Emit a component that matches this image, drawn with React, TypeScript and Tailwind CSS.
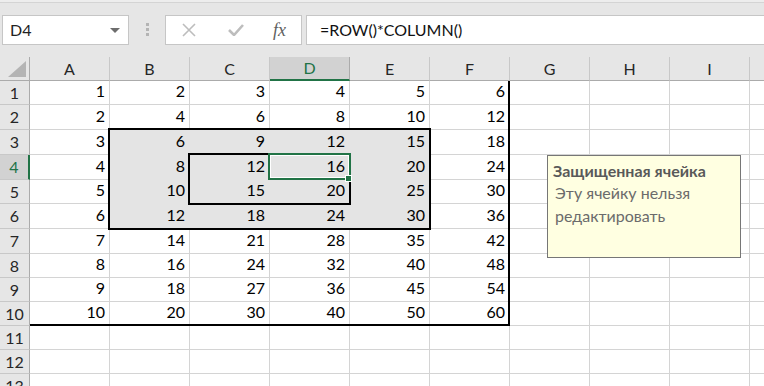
import React from 'react';

const COLS = ['A', 'B', 'C', 'D', 'E', 'F', 'G', 'H', 'I', 'J'];
const ROW_H = [24, 25, 25, 25, 24, 25, 25, 24, 24, 24, 24, 24, 24];

const inSel = (r: number, c: number) => r >= 3 && r <= 6 && c >= 2 && c <= 5;

const Toolbar = () => (
    <div className="h-[57px] shrink-0 flex flex-col">
        <div className="h-[2px] bg-[#ededed]" />
        <div className="h-[1px] bg-[#d4d4d4]" />
        <div className="flex items-start pt-[12px]">
            {/* NAME BOX */}
            <div className="ml-[2px] w-[127px] h-[30px] bg-white border border-[#c6c6c6] flex items-center justify-between pl-[7px] pr-[8px]">
                <span className="text-[16px] text-[#222]">D4</span>
                <span className="w-0 h-0 border-l-[5px] border-r-[5px] border-t-[5px] border-l-transparent border-r-transparent border-t-[#6d6d6d]" />
            </div>

            {/* GRIP */}
            <div className="ml-[17px] mt-[8px] flex flex-col gap-[2px]">
                <div className="w-[3px] h-[3px] bg-[#b4b4b4]" />
                <div className="w-[3px] h-[3px] bg-[#b4b4b4]" />
                <div className="w-[3px] h-[3px] bg-[#b4b4b4]" />
            </div>

            {/* CANCEL / ENTER / FX */}
            <div className="ml-[16px] w-[137px] h-[30px] bg-white border border-[#c6c6c6] flex items-center">
                <svg width="14" height="14" viewBox="0 0 14 14" className="ml-[16px]">
                    <path d="M1 1 L13 13 M13 1 L1 13" stroke="#bdbdbd" strokeWidth="1.6" fill="none" />
                </svg>
                <svg width="16" height="12" viewBox="0 0 16 12" className="ml-[32px]">
                    <path d="M1 6 L6 11 L15 1" stroke="#bdbdbd" strokeWidth="2.6" fill="none" />
                </svg>
                <span className="ml-[29px] text-[18px] italic text-[#5f5f5f] font-['Liberation_Serif',serif] leading-none">fx</span>
            </div>

            {/* FORMULA INPUT */}
            <div className="ml-[4px] flex-1 h-[30px] bg-white border border-[#c6c6c6] border-r-0 flex items-center pl-[13px]">
                <span className="text-[16px] text-[#111]">=ROW()*COLUMN()</span>
            </div>
        </div>
    </div>
);

const HeaderRow = () => (
    <div className="flex h-[24px] shrink-0">
        <div className="w-[30px] shrink-0 border-r border-b border-[#ababab] bg-[#e6e6e6] relative">
            <svg width="18" height="16" viewBox="0 0 18 16" className="absolute right-[3px] bottom-[3px]">
                <path d="M18 0 L18 16 L0 16 Z" fill="#b4b4b4" />
            </svg>
        </div>
        {COLS.map((c) => {
            const active = c === 'D';
            return (
                <div
                    key={c}
                    className={
                        active
                            ? 'w-[80px] shrink-0 flex items-center justify-center bg-[#d2d2d2] border-r border-r-[#ababab] border-b-2 border-b-[#217346] text-[#217346] text-[16px]'
                            : 'w-[80px] shrink-0 flex items-center justify-center bg-[#e6e6e6] border-r border-b border-r-[#c8c8c8] border-b-[#ababab] text-[#262626] text-[16px]'
                    }
                >
                    {c}
                </div>
            );
        })}
    </div>
);

const Row = ({ r, h }: { r: number; h: number }) => {
    const activeRow = r === 4;
    return (
        <div className="flex shrink-0" style={{ height: h }}>
            <div
                className={
                    activeRow
                        ? 'w-[30px] shrink-0 flex items-center justify-center bg-[#d2d2d2] border-r-2 border-r-[#217346] border-b border-b-[#c8c8c8] text-[#217346] text-[16px]'
                        : 'w-[30px] shrink-0 flex items-center justify-center bg-[#e6e6e6] border-r border-b border-r-[#ababab] border-b-[#c8c8c8] text-[#262626] text-[16px]'
                }
            >
                {r}
            </div>
            {COLS.map((_, i) => {
                const c = i + 1;
                const sel = inSel(r, c);
                const val = r <= 10 && c <= 6 ? r * c : null;
                return (
                    <div
                        key={c}
                        className={
                            sel
                                ? 'w-[80px] shrink-0 flex items-end justify-end pr-[4px] pb-[1px] bg-[#e4e4e4] border-r border-b border-[#e4e4e4] text-[16px] text-black'
                                : 'w-[80px] shrink-0 flex items-end justify-end pr-[4px] pb-[1px] bg-white border-r border-b border-[#d4d4d4] text-[16px] text-black'
                        }
                    >
                        {val}
                    </div>
                );
            })}
        </div>
    );
};

export default function App() {
    return (
        <div className="w-[764px] h-[386px] overflow-hidden bg-[#e6e6e6] relative flex flex-col font-['Lato',sans-serif]">
            <Toolbar />
            <HeaderRow />
            {ROW_H.map((h, i) => (
                <Row key={i} r={i + 1} h={h} />
            ))}

            {/* RANGE BORDERS */}
            <div className="absolute left-[30px] top-[81px] w-[480px] h-[245px] border-r-2 border-b-2 border-black" />
            <div className="absolute left-[108px] top-[128px] w-[323px] h-[102px] border-2 border-black" />
            <div className="absolute left-[188px] top-[153px] w-[163px] h-[52px] border-2 border-black" />

            {/* ACTIVE CELL */}
            <div className="absolute left-[268px] top-[153px] w-[83px] h-[27px] border-2 border-[#217346]">
                <div className="w-full h-full border border-white" />
            </div>
            <div className="absolute left-[345px] top-[175px] w-[7px] h-[7px] bg-[#217346] border border-white" />

            {/* PROTECTED CELL TOOLTIP */}
            <div className="absolute left-[547px] top-[155px] w-[194px] h-[103px] bg-[#ffffe1] border border-[#767676] px-[5px] pt-[4px]">
                <div className="text-[16px] font-bold text-[#595959] leading-[21px]">Защищенная ячейка</div>
                <div className="pl-[2px] text-[16px] text-[#6b6b6b] leading-[23px]">
                    Эту ячейку нельзя
                    <br />
                    редактировать
                </div>
            </div>
        </div>
    );
}
